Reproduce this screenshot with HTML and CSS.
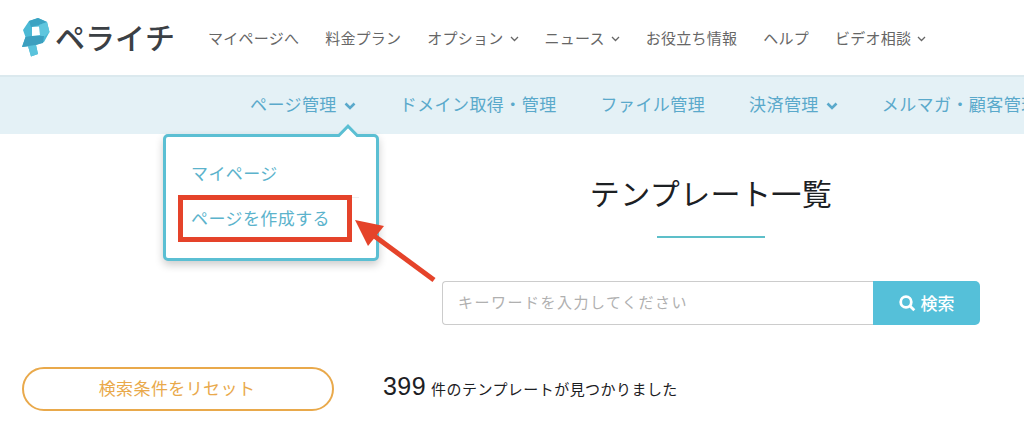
FILE: index.html
```html
<!DOCTYPE html>
<html lang="ja">
<head>
  <meta charset="UTF-8">
  <meta name="viewport" content="width=device-width, initial-scale=1.0">
  <title>テンプレート一覧 | ペライチ</title>
  <link rel="stylesheet" href="styles.css">
</head>
<body>
  <header class="header">
    <a class="logo" href="#">
      <svg class="logo-mark" width="28" height="40" viewBox="0 0 28 40">
        <path fill="#4bb9d5" d="M7 3L16 0L25 4L27.5 14L22 24L14 27L16 36L9 38.5L6 28L0 29L3.5 19L1 12Z"/>
        <path fill="#3ba3c2" d="M7 3L16 0L25 4L17 7L9 9Z"/>
        <path fill="#5fc6de" d="M25 4L27.5 14L22 19L18 17L17 7Z"/>
        <path fill="#3c9fbf" d="M3.5 19L9 18L22 18L21 25L10 28L0 29Z"/>
        <path fill="#5ac3dc" d="M6 28L14 27L16 36L9 38.5Z"/>
        <path fill="#fff" d="M10 9L17 8.500L18 17L10 18Z"/>
      </svg>
      <span class="logo-text">ペライチ</span>
    </a>
    <nav class="nav">
      <a href="#">マイページへ</a>
      <a href="#">料金プラン</a>
      <a href="#">オプション<svg class="chevron" width="9" height="6" viewBox="0 0 9 6"><path d="M1 1L4.5 4.5L8 1"/></svg></a>
      <a href="#">ニュース<svg class="chevron" width="9" height="6" viewBox="0 0 9 6"><path d="M1 1L4.5 4.5L8 1"/></svg></a>
      <a href="#">お役立ち情報</a>
      <a href="#">ヘルプ</a>
      <a href="#">ビデオ相談<svg class="chevron" width="9" height="6" viewBox="0 0 9 6"><path d="M1 1L4.5 4.5L8 1"/></svg></a>
    </nav>
  </header>

  <nav class="subnav">
    <div class="subnav-item">
      <a href="#">ページ管理<svg class="chevron-bold" width="12" height="9" viewBox="0 0 12 9"><path d="M1.5 1.5L6 6L10.5 1.5"/></svg></a>
      <div class="dropdown">
        <svg class="dropdown-arrow" width="22" height="13" viewBox="0 0 22 13"><path d="M1 11.5L11 2L21 11.5V13H1Z" fill="#fff"/><path d="M0 11.5H1.8L11 2.2L20.2 11.5H22" fill="none" stroke="#5bbfd3" stroke-width="3"/></svg>
        <a href="#">マイページ</a>
        <a href="#">ページを作成する</a>
        <div class="highlight"></div>
        <svg class="pointer" width="84" height="66" viewBox="0 0 84 66"><path d="M79 60L18 15" stroke="#e5432a" stroke-width="5"/><path d="M0 0L29 6L13 26Z" fill="#e5432a"/></svg>
      </div>
    </div>
    <div class="subnav-item"><a href="#">ドメイン取得・管理</a></div>
    <div class="subnav-item"><a href="#">ファイル管理</a></div>
    <div class="subnav-item"><a href="#">決済管理<svg class="chevron-bold" width="12" height="9" viewBox="0 0 12 9"><path d="M1.5 1.5L6 6L10.5 1.5"/></svg></a></div>
    <div class="subnav-item"><a href="#">メルマガ・顧客管理</a></div>
  </nav>

  <main class="main">
    <aside class="sidebar">
      <button class="reset" type="button">検索条件をリセット</button>
    </aside>
    <section class="content">
      <h1>テンプレート一覧</h1>
      <form class="search">
        <input type="text" placeholder="キーワードを入力してください">
        <button type="button">
          <svg width="17" height="17" viewBox="0 0 17 17"><circle cx="7" cy="7" r="5.3"/><path d="M11 11L15.3 15.3"/></svg>検索
        </button>
      </form>
      <p class="count"><span>399</span>件のテンプレートが見つかりました</p>
    </section>
  </main>
</body>
</html>
```

FILE: styles.css
```css
* {
  margin: 0;
  padding: 0;
  box-sizing: border-box;
}

body {
  font-family: "Liberation Sans", "Noto Sans CJK JP", sans-serif;
  background-color: #fff;
  color: #1c2023;
  overflow: hidden;
}

a {
  color: inherit;
  text-decoration: none;
  white-space: nowrap;
}

/* Header */
.header {
  display: flex;
  height: 75px;
  padding-left: 22px;
}

.logo {
  display: flex;
  align-items: center;
  width: 186px;
}

.logo-mark {
  margin-right: 5px;
}

.logo-text {
  padding-top: 2px;
  font-size: 30px;
  font-weight: 500;
  line-height: 40px;
  color: #3b4045;
}

.nav {
  display: flex;
  align-items: center;
  gap: 26px;
  font-size: 15px;
  letter-spacing: 0.24px;
  color: #666;
}

.chevron {
  margin-left: 6px;
  vertical-align: 2px;
  fill: none;
  stroke: #666;
  stroke-width: 1.3;
}

/* Sub navigation */
.subnav {
  display: flex;
  gap: 44px;
  height: 59px;
  padding-left: 250px;
  background-color: #e4f1f6;
  border-top: 2px solid #dbe9ee;
  font-size: 17px;
  letter-spacing: 0.42px;
  line-height: 57px;
  color: #5aa9cb;
}

.subnav-item {
  position: relative;
  flex-shrink: 0;
}

.chevron-bold {
  margin-left: 7px;
  fill: none;
  stroke: #5aa9cb;
  stroke-width: 2.6;
}

.dropdown {
  position: absolute;
  top: 57px;
  left: -87px;
  z-index: 1;
  width: 216px;
  height: 127px;
  padding: 16px 17px 0 25px;
  background-color: #fff;
  border: 3px solid #5bbfd3;
  border-radius: 5px;
  box-shadow: 0 4px 8px rgba(0, 0, 0, 0.2);
  line-height: 44px;
  color: #5bb3cc;
}

.dropdown a {
  display: block;
}

.dropdown a + a {
  border-top: 1px solid #eee;
}

.dropdown-arrow {
  position: absolute;
  top: -13px;
  right: 17px;
}

/* Callout over the dropdown */
.highlight {
  position: absolute;
  top: 58px;
  left: 12px;
  width: 174px;
  height: 47px;
  border: 5px solid #e5432a;
}

.pointer {
  position: absolute;
  top: 83px;
  left: 189px;
}

/* Main */
.main {
  display: flex;
  align-items: flex-start;
  padding: 0 44px 0 22px;
}

.sidebar {
  width: 312px;
  margin-right: 49px;
  padding-top: 233px;
}

.reset {
  display: block;
  width: 312px;
  height: 44px;
  padding: 0 2px 3px 0;
  background-color: #fff;
  border: 2px solid #e9a94b;
  border-radius: 22px;
  color: #e9a94b;
  font-family: inherit;
  font-size: 17px;
  letter-spacing: 0.4px;
}

.content {
  flex: 1;
}

h1 {
  display: flex;
  flex-direction: column;
  align-items: center;
  margin-left: 59px;
  padding-top: 39px;
  font-size: 30px;
  font-weight: 400;
  letter-spacing: 0.4px;
  line-height: 44px;
}

h1::after {
  content: "";
  width: 108px;
  height: 2px;
  margin-top: 19px;
  background-color: #5dbfc9;
}

.search {
  display: flex;
  height: 44px;
  margin: 43px 0 0 59px;
}

.search input {
  flex: 1;
  min-width: 0;
  padding: 0 0 2px 15px;
  border: 1px solid #ccc;
  border-right: 0;
  border-radius: 4px 0 0 4px;
  font-family: inherit;
  font-size: 15px;
  letter-spacing: 1.5px;
}

.search input::placeholder {
  color: #b0b0b0;
}

.search button {
  display: flex;
  align-items: center;
  justify-content: center;
  gap: 5px;
  width: 107px;
  padding-bottom: 2px;
  background-color: #55c0d9;
  border: 0;
  border-radius: 0 5px 5px 0;
  color: #fff;
  font-family: inherit;
  font-size: 17px;
  font-weight: 500;
}

.search button svg {
  position: relative;
  top: 1px;
  fill: none;
  stroke: #fff;
  stroke-width: 2.8;
}

.count {
  margin-top: 43px;
  font-size: 15px;
  letter-spacing: 0.45px;
  line-height: 36px;
}

.count span {
  margin-right: 5px;
  font-size: 25px;
}
```
